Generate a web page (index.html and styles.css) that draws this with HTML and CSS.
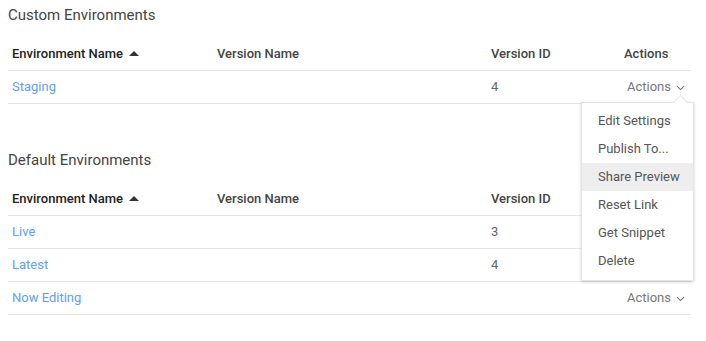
FILE: index.html
```html
<!DOCTYPE html>
<html>
<head>
<meta charset="utf-8">
<link rel="stylesheet" href="styles.css">
</head>
<body>
<div class="page">
  <section class="section">
    <h2 class="section-title">Custom Environments</h2>
    <div class="table">
      <div class="row head">
        <div class="c c1 sorted">Environment Name <span class="tri"></span></div>
        <div class="c c2">Version Name</div>
        <div class="c c3">Version ID</div>
        <div class="c c4">Actions</div>
      </div>
      <div class="row">
        <div class="c c1"><a class="link">Staging</a></div>
        <div class="c c2"></div>
        <div class="c c3">4</div>
        <div class="c c4 act-cell">
          <span class="actions">Actions <svg class="chev" width="9" height="6" viewBox="0 0 9 6"><path d="M1 1.2 L4.5 4.6 L8 1.2" fill="none" stroke="#777" stroke-width="1.1"/></svg></span>
          <div class="menu">
            <div class="item">Edit Settings</div>
            <div class="item">Publish To...</div>
            <div class="item hover">Share Preview</div>
            <div class="item">Reset Link</div>
            <div class="item">Get Snippet</div>
            <div class="item">Delete</div>
          </div>
        </div>
      </div>
    </div>
  </section>
  <section class="section second">
    <h2 class="section-title">Default Environments</h2>
    <div class="table">
      <div class="row head">
        <div class="c c1 sorted">Environment Name <span class="tri"></span></div>
        <div class="c c2">Version Name</div>
        <div class="c c3">Version ID</div>
        <div class="c c4">Actions</div>
      </div>
      <div class="row">
        <div class="c c1"><a class="link">Live</a></div>
        <div class="c c2"></div>
        <div class="c c3">3</div>
        <div class="c c4"></div>
      </div>
      <div class="row">
        <div class="c c1"><a class="link">Latest</a></div>
        <div class="c c2"></div>
        <div class="c c3">4</div>
        <div class="c c4"></div>
      </div>
      <div class="row">
        <div class="c c1"><a class="link">Now Editing</a></div>
        <div class="c c2"></div>
        <div class="c c3"></div>
        <div class="c c4 act-cell"><span class="actions">Actions <svg class="chev" width="9" height="6" viewBox="0 0 9 6"><path d="M1 1.2 L4.5 4.6 L8 1.2" fill="none" stroke="#777" stroke-width="1.1"/></svg></span></div>
      </div>
    </div>
  </section>
</div>
</body>
</html>
```
FILE: styles.css
```css
html, body {
  margin: 0;
  padding: 0;
  background: #fff;
}
body {
  font-family: Roboto, "Noto Sans", Arial, sans-serif;
  color: #555;
  font-size: 13px;
}
.page {
  padding: 5px 15px 0 8px;
}
.section-title {
  margin: 0;
  font-size: 15px;
  line-height: 20px;
  font-weight: 400;
  color: #444;
}
.second {
  margin-top: 46px;
}
.table {
  margin-top: 13px;
}
.row {
  display: grid;
  grid-template-columns: 205px 274px 133px 1fr;
  height: 33px;
  border-bottom: 1px solid #e6e6e6;
  align-items: center;
  box-sizing: border-box;
}
.head .c {
  font-weight: 500;
  color: #444;
}
.head .c1 {
  color: #222;
}
.c {
  padding-left: 4px;
  white-space: nowrap;
  line-height: 16px;
}
.c3 {
  color: #666;
}
.tri {
  display: inline-block;
  width: 0;
  height: 0;
  border-left: 5px solid transparent;
  border-right: 5px solid transparent;
  border-bottom: 5px solid #333;
  margin-left: 3px;
  vertical-align: 2px;
}
.link {
  color: #639ef0;
  cursor: pointer;
}
.act-cell {
  position: relative;
  padding-left: 7px;
}
.actions {
  color: #777;
  display: inline-flex;
  align-items: center;
  gap: 5px;
}
.chev {
  display: block;
  margin-top: 1px;
}
.menu {
  position: absolute;
  top: 23px;
  left: -39px;
  width: 111px;
  background: #fff;
  border: 1px solid #e4e4e4;
  box-shadow: 0 1px 3px rgba(0,0,0,0.18);
  padding: 4px 0 5px;
  z-index: 5;
}
.menu::before {
  content: "";
  position: absolute;
  top: -6px;
  right: 7px;
  width: 10px;
  height: 10px;
  background: #fff;
  border-left: 1px solid #e4e4e4;
  border-top: 1px solid #e4e4e4;
  transform: rotate(45deg);
}
.item {
  position: relative;
  height: 28px;
  line-height: 28px;
  padding-left: 16px;
  color: #555;
  font-size: 13px;
}
.item.hover {
  background: #eeeeee;
}
```
